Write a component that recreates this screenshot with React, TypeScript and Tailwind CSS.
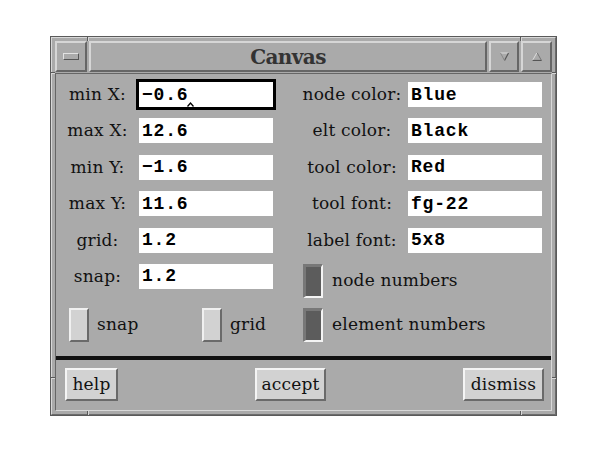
import React from "react";

const labelCls = "font-['DejaVu_Serif',serif] text-[17px] tracking-[0.2px] leading-none text-[#111] whitespace-nowrap";
const valueCls = "font-['Liberation_Mono',monospace] font-bold text-[18px] tracking-[0.8px] leading-none text-black whitespace-nowrap";

function Field({ value, focused }: { value: string; focused?: boolean }) {
  return (
    <div
      className={
        focused
          ? `relative w-[134px] h-[25px] shrink-0 bg-white flex items-center pl-[3px] outline-3 outline-black ${valueCls}`
          : `relative w-[134px] h-[25px] shrink-0 bg-white flex items-center pl-[3px] ${valueCls}`
      }
    >
      {value}
      {focused && (
        <svg className="absolute left-[48px] top-[20px]" width="7" height="5" viewBox="0 0 7 5">
          <path d="M0.5 4.5 L3.5 1 L6.5 4.5" stroke="#000" strokeWidth="1.3" fill="none" />
        </svg>
      )}
    </div>
  );
}

function Toggle({ on }: { on?: boolean }) {
  return on ? (
    <div className="w-[20px] h-[34px] shrink-0 bg-[#5c5c5c] border-t-[3px] border-l-[3px] border-b-2 border-r-2 border-t-[#787878] border-l-[#787878] border-b-[#f4f4f4] border-r-[#f4f4f4]" />
  ) : (
    <div className="w-[20px] h-[34px] shrink-0 bg-[#d2d2d2] border-2 border-t-[#f0f0f0] border-l-[#f0f0f0] border-b-[#6a6a6a] border-r-[#6a6a6a]" />
  );
}

function Row({
  l,
  lv,
  r,
  rv,
  focused,
}: {
  l: string;
  lv: string;
  r: string;
  rv: string;
  focused?: boolean;
}) {
  return (
    <div className="flex items-center h-[25px]">
      <div className={`w-[83px] text-center ${labelCls}`}>{l}</div>
      <Field value={lv} focused={focused} />
      <div className="w-[23px] shrink-0" />
      <div className={`w-[112px] text-center ${labelCls}`}>{r}</div>
      <Field value={rv} />
    </div>
  );
}

function Btn({ children, w }: { children: React.ReactNode; w: string }) {
  return (
    <div
      className={`${w} h-[33px] bg-[#d2d2d2] border-2 border-t-[#f4f4f4] border-l-[#f4f4f4] border-b-[#6a6a6a] border-r-[#6a6a6a] flex items-center justify-center ${labelCls}`}
    >
      {children}
    </div>
  );
}

export default function App() {
  return (
    <div className="w-[607px] h-[455px] bg-white pt-[36px] pl-[50px]">
      <div className="relative w-[507px] h-[380px] bg-[#aaaaaa] border border-[#5a5a5a]">
        <div className="h-full border border-t-[#d8d8d8] border-l-[#d8d8d8] border-b-[#6c6c6c] border-r-[#6c6c6c] p-[3px] flex flex-col">
          {/* title bar */}
          <div className="h-[31px] flex gap-[2px] shrink-0">
            <div className="w-[32px] h-full border-2 border-t-[#d6d6d6] border-l-[#d6d6d6] border-b-[#666] border-r-[#666] flex items-center justify-center">
              <div className="w-[16px] h-[7px] border border-t-[#e2e2e2] border-l-[#e2e2e2] border-b-[#555] border-r-[#555]" />
            </div>
            <div className="flex-1 h-full border-2 border-t-[#d6d6d6] border-l-[#d6d6d6] border-b-[#666] border-r-[#666] flex items-center justify-center">
              <span className="font-['DejaVu_Serif',serif] font-bold text-[20px] leading-none text-[#333] tracking-[-0.6px]">
                Canvas
              </span>
            </div>
            <div className="w-[30px] h-full border-2 border-t-[#d6d6d6] border-l-[#d6d6d6] border-b-[#666] border-r-[#666] flex items-center justify-center">
              <svg width="9" height="9" viewBox="0 0 9 9">
                <path d="M0.5 1 H8.5" stroke="#dcdcdc" strokeWidth="1" />
                <path d="M8.5 1 L4.5 8.5" stroke="#555" strokeWidth="1.2" fill="none" />
                <path d="M0.5 1 L4.5 8.5" stroke="#888" strokeWidth="1" fill="none" />
              </svg>
            </div>
            <div className="w-[31px] h-full border-2 border-t-[#d6d6d6] border-l-[#d6d6d6] border-b-[#666] border-r-[#666] flex items-center justify-center">
              <svg width="10" height="9" viewBox="0 0 10 9">
                <path d="M0.5 8.5 L5 0.5" stroke="#dcdcdc" strokeWidth="1" fill="none" />
                <path d="M5 0.5 L9.5 8.5" stroke="#777" strokeWidth="1" fill="none" />
                <path d="M0.5 8.5 H9.5" stroke="#555" strokeWidth="1.2" />
              </svg>
            </div>
          </div>
          {/* client area */}
          <div className="mt-[1px] flex-1 border border-t-[#666] border-l-[#666] border-b-[#d8d8d8] border-r-[#d8d8d8] flex flex-col">
            <div className="pt-[8px] flex flex-col gap-[11.4px]">
              <Row l="min X:" lv="−0.6" r="node color:" rv="Blue" focused />
              <Row l="max X:" lv="12.6" r="elt color:" rv="Black" />
              <Row l="min Y:" lv="−1.6" r="tool color:" rv="Red" />
              <Row l="max Y:" lv="11.6" r="tool font:" rv="fg-22" />
              <Row l="grid:" lv="1.2" r="label font:" rv="5x8" />
              <div className="flex items-start">
                <div className={`w-[83px] h-[25px] flex items-center justify-center ${labelCls}`}>snap:</div>
                <Field value="1.2" />
                <div className="w-[30px] shrink-0" />
                <Toggle on />
                <div className={`self-center ml-[9px] ${labelCls}`}>node numbers</div>
              </div>
            </div>
            <div className="mt-[10px] flex items-center">
              <div className="w-[146px] shrink-0 flex items-center pl-[13px]">
                <Toggle />
                <span className={`ml-[8px] ${labelCls}`}>snap</span>
              </div>
              <div className="w-[101px] shrink-0 flex items-center">
                <Toggle />
                <span className={`ml-[8px] ${labelCls}`}>grid</span>
              </div>
              <div className="flex items-center">
                <Toggle on />
                <span className={`ml-[9px] ${labelCls}`}>element numbers</span>
              </div>
            </div>
            <div className="mt-[14px] h-[4px] bg-[#111] shrink-0" />
            <div className="flex-1 flex items-center justify-between pl-[9px] pr-[7px]">
              <Btn w="w-[53px]">help</Btn>
              <Btn w="w-[71px]">accept</Btn>
              <Btn w="w-[81px]">dismiss</Btn>
            </div>
          </div>
        </div>
        {/* resize handle notches */}
        <div className="absolute left-[36px] top-0 w-[1px] h-[4px] bg-[#5a5a5a]" />
        <div className="absolute left-[37px] top-0 w-[1px] h-[4px] bg-[#d8d8d8]" />
        <div className="absolute left-[469px] top-0 w-[1px] h-[4px] bg-[#5a5a5a]" />
        <div className="absolute left-[470px] top-0 w-[1px] h-[4px] bg-[#d8d8d8]" />
        <div className="absolute left-[36px] bottom-0 w-[1px] h-[4px] bg-[#5a5a5a]" />
        <div className="absolute left-[37px] bottom-0 w-[1px] h-[4px] bg-[#d8d8d8]" />
        <div className="absolute left-[469px] bottom-0 w-[1px] h-[4px] bg-[#5a5a5a]" />
        <div className="absolute left-[470px] bottom-0 w-[1px] h-[4px] bg-[#d8d8d8]" />
        <div className="absolute left-0 top-[35px] w-[4px] h-[1px] bg-[#5a5a5a]" />
        <div className="absolute left-0 top-[36px] w-[4px] h-[1px] bg-[#d8d8d8]" />
        <div className="absolute right-0 top-[35px] w-[4px] h-[1px] bg-[#5a5a5a]" />
        <div className="absolute right-0 top-[36px] w-[4px] h-[1px] bg-[#d8d8d8]" />
        <div className="absolute left-0 top-[340px] w-[4px] h-[1px] bg-[#5a5a5a]" />
        <div className="absolute left-0 top-[341px] w-[4px] h-[1px] bg-[#d8d8d8]" />
        <div className="absolute right-0 top-[340px] w-[4px] h-[1px] bg-[#5a5a5a]" />
        <div className="absolute right-0 top-[341px] w-[4px] h-[1px] bg-[#d8d8d8]" />
      </div>
    </div>
  );
}
